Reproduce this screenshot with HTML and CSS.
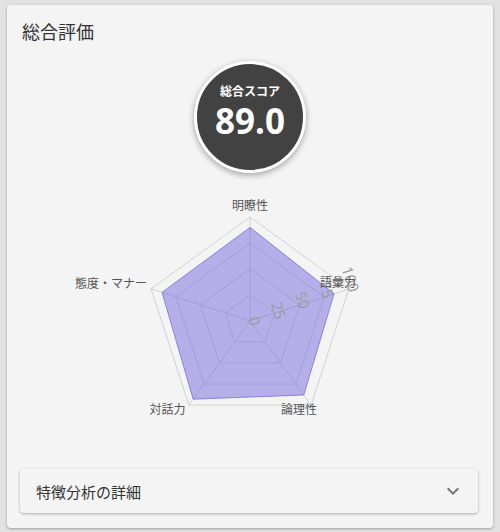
FILE: index.html
```html
<!DOCTYPE html>
<html lang="ja">
<head>
<meta charset="utf-8">
<link rel="stylesheet" href="styles.css">
</head>
<body>
<div class="card">
  <h2 class="title">総合評価</h2>
  <div class="score-wrap">
    <div class="score">
      <div class="score-label">総合スコア</div>
      <div class="score-value">89.0</div>
    </div>
  </div>
  <svg class="radar" width="486" height="260" viewBox="0 0 486 260">
    <g class="grid">
      <polygon points="243,37 341.9,108.9 304.1,225.1 181.9,225.1 144.1,108.9"/>
      <polygon points="243,63 317.2,116.9 288.8,204.1 197.2,204.1 168.8,116.9"/>
      <polygon points="243,89 292.5,124.9 273.6,183.1 212.4,183.1 193.5,124.9"/>
      <polygon points="243,115 267.7,133 258.3,162 227.7,162 218.3,133"/>
      <line x1="243" y1="141" x2="243" y2="37"/>
      <line x1="243" y1="141" x2="341.9" y2="108.9"/>
      <line x1="243" y1="141" x2="304.1" y2="225.1"/>
      <line x1="243" y1="141" x2="181.9" y2="225.1"/>
      <line x1="243" y1="141" x2="144.1" y2="108.9"/>
    </g>
    <polygon class="data" points="243,47.4 327.1,113.7 296.8,215 186.2,219.2 155,112.4"/>
    <g class="ticks">
      <text transform="translate(248,141) rotate(72)">0</text>
      <text transform="translate(272,130.5) rotate(72)">25</text>
      <text transform="translate(296,120) rotate(72)">50</text>
      <text transform="translate(320,109.5) rotate(72)">75</text>
      <text transform="translate(344,99) rotate(72)">100</text>
    </g>
    <g class="labels">
      <text x="243" y="24">明瞭性</text>
      <text x="331" y="101">語彙力</text>
      <text x="292" y="228">論理性</text>
      <text x="160.5" y="228">対話力</text>
      <text x="104" y="102.5">態度・マナー</text>
    </g>
  </svg>
  <div class="panel">
    <span class="panel-title">特徴分析の詳細</span>
    <svg class="chev" width="24" height="24" viewBox="0 0 24 24"><path d="M7.41 8.59 12 13.17l4.59-4.58L18 10l-6 6-6-6z"/></svg>
  </div>
</div>
</body>
</html>
```
FILE: styles.css
```css
html, body {
  margin: 0;
  padding: 0;
  background: #e2e2e2;
}
body {
  width: 500px;
  height: 532px;
  overflow: hidden;
  font-family: "Noto Sans CJK JP", "Noto Sans", sans-serif;
}
.card {
  margin: 5px 7px 0 7px;
  width: 486px;
  height: 523px;
  box-sizing: border-box;
  background: #f4f4f4;
  border-radius: 4px;
  box-shadow: 0 1px 3px rgba(0,0,0,0.3);
  padding-bottom: 15px;
  display: flex;
  flex-direction: column;
}
.title {
  margin: 0;
  padding: 13px 0 0 15px;
  font-size: 18px;
  line-height: 26px;
  font-weight: 400;
  color: #333;
}
.score-wrap {
  display: flex;
  justify-content: center;
  margin-top: 17px;
}
.score {
  width: 106px;
  height: 96px;
  padding-bottom: 10px;
  box-sizing: content-box;
  border-radius: 50%;
  background: #424242;
  border: 3px solid #fff;
  box-shadow: 0 2px 6px rgba(0,0,0,0.35);
  display: flex;
  flex-direction: column;
  align-items: center;
  justify-content: center;
  color: #fff;
}
.score-label {
  font-size: 12px;
  font-weight: 700;
  line-height: 18px;
}
.score-value {
  font-family: "Noto Sans", "Open Sans", sans-serif;
  font-size: 35px;
  font-weight: 700;
  line-height: 42px;
}
.radar {
  display: block;
  margin-top: 7px;
}
.grid polygon, .grid line {
  fill: none;
  stroke: #d2d2d2;
  stroke-width: 1;
}
.data {
  fill: rgba(115, 105, 220, 0.5);
  stroke: rgba(115, 105, 220, 0.75);
  stroke-width: 1;
}
.ticks text {
  font-family: "Noto Sans", sans-serif;
  font-size: 15px;
  fill: #9c9c9c;
  text-anchor: middle;
  dominant-baseline: central;
}
.labels text {
  font-size: 12px;
  fill: #555;
  text-anchor: middle;
  dominant-baseline: central;
}
.panel {
  margin: auto 15px 0 13px;
  height: 44px;
  background: #f4f4f4;
  border-radius: 4px;
  box-shadow: 0 1px 3px rgba(0,0,0,0.3);
  display: flex;
  align-items: center;
  justify-content: space-between;
  padding: 0 16px;
}
.panel-title {
  font-size: 15px;
  color: #333;
}
.chev {
  fill: #777;
  margin-right: -3px;
}
```
